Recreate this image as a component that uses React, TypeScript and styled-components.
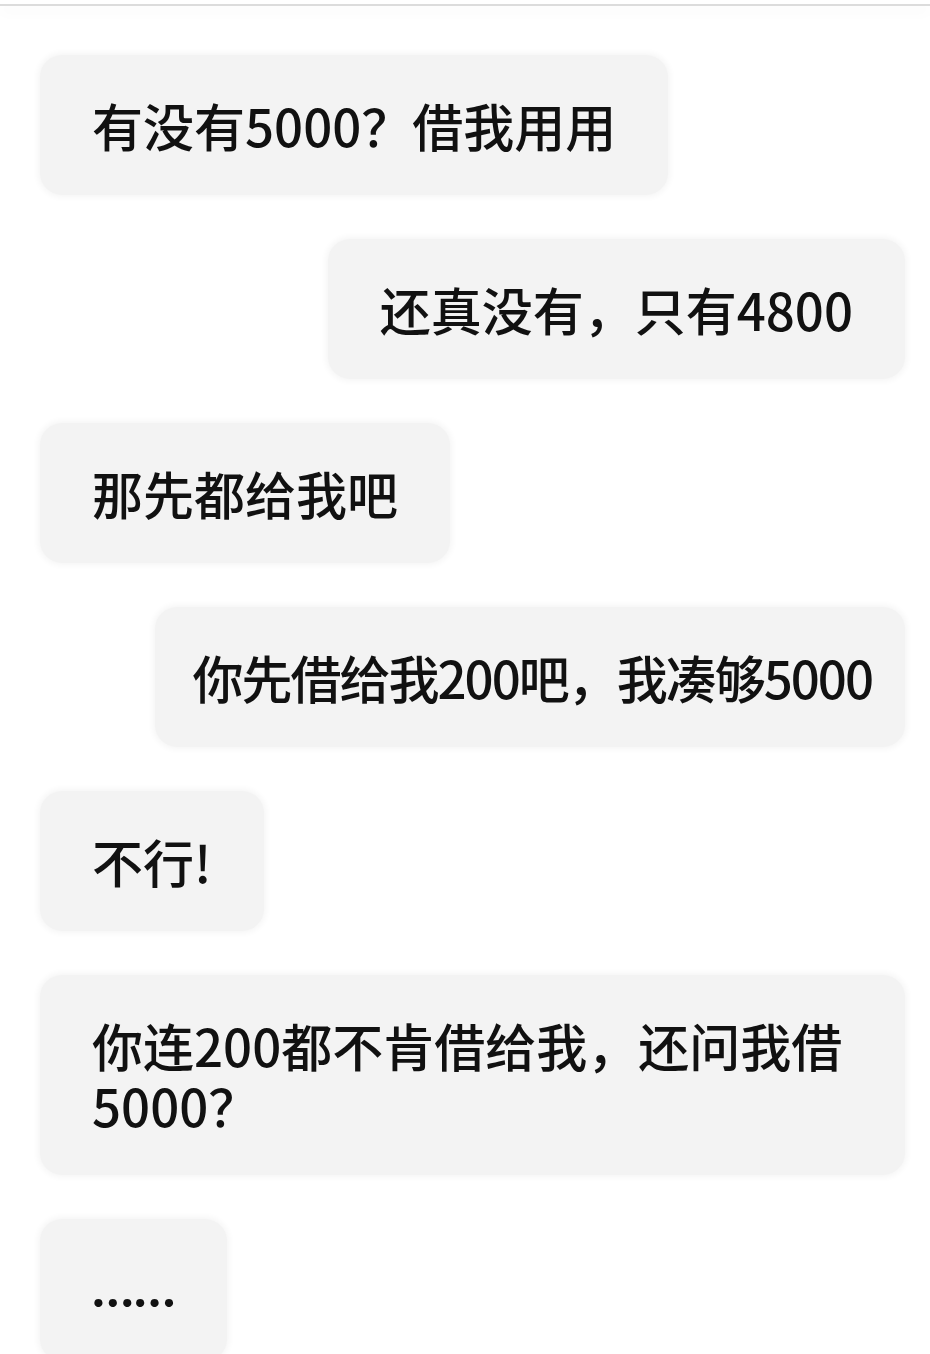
import React from 'react';
import styled, { createGlobalStyle } from 'styled-components';

interface Message {
    id: number;
    text: string;
    mine: boolean;
    squeeze?: boolean;
    dots?: boolean;
}

const messages: Message[] = [
    { id: 1, text: '有没有5000？借我用用', mine: false },
    { id: 2, text: '还真没有，只有4800', mine: true },
    { id: 3, text: '那先都给我吧', mine: false },
    { id: 4, text: '你先借给我200吧，我凑够5000', mine: true, squeeze: true },
    { id: 5, text: '不行!', mine: false },
    { id: 6, text: '你连200都不肯借给我，还问我借5000？', mine: false },
    { id: 7, text: '……', mine: false, dots: true },
];

const GlobalStyle = createGlobalStyle`
    html, body {
        margin: 0;
        padding: 0;
        background: #ffffff;
    }
    body {
        font-family: 'Noto Sans CJK SC', 'Noto Sans', sans-serif;
    }
`;

const App: React.FC = () => {
    return (
        <>
            <GlobalStyle />
            <ChatWrap>
                <TopRule />
                <MessageList>
                    {messages.map((msg) => (
                        <Row key={msg.id} $mine={msg.mine}>
                            <Bubble $squeeze={!!msg.squeeze}>
                                {msg.dots ? <Dots>{msg.text}</Dots> : msg.text}
                            </Bubble>
                        </Row>
                    ))}
                </MessageList>
            </ChatWrap>
        </>
    );
};

export default App;

const ChatWrap = styled.main`
    width: 930px;
    height: 1354px;
    overflow: hidden;
    background: #ffffff;
`;

const TopRule = styled.div`
    height: 4px;
    border-bottom: 2px solid #dcdcdc;
    box-shadow: 0 6px 14px rgba(0, 0, 0, 0.03);
`;

const MessageList = styled.ul`
    list-style: none;
    margin: 0;
    padding: 49px 25px 0 40px;
    display: flex;
    flex-direction: column;
    gap: 44px;
`;

const Row = styled.li<{ $mine: boolean }>`
    display: flex;
    justify-content: ${(p) => (p.$mine ? 'flex-end' : 'flex-start')};
`;

const Bubble = styled.div<{ $squeeze: boolean }>`
    max-width: 100%;
    box-sizing: border-box;
    padding: 40px ${(p) => (p.$squeeze ? '33px 40px 38px' : '52px')};
    border-radius: 22px;
    background: #f3f3f3;
    box-shadow: 0 0 6px 2px #f5f5f5;
    color: #111111;
    font-size: 51px;
    font-weight: 500;
    line-height: 60px;
    letter-spacing: ${(p) => (p.$squeeze ? '-2px' : '0')};
`;

const Dots = styled.span`
    position: relative;
    top: -4px;
    font-family: Lato, sans-serif;
    font-weight: 700;
    font-size: 54px;
`;
